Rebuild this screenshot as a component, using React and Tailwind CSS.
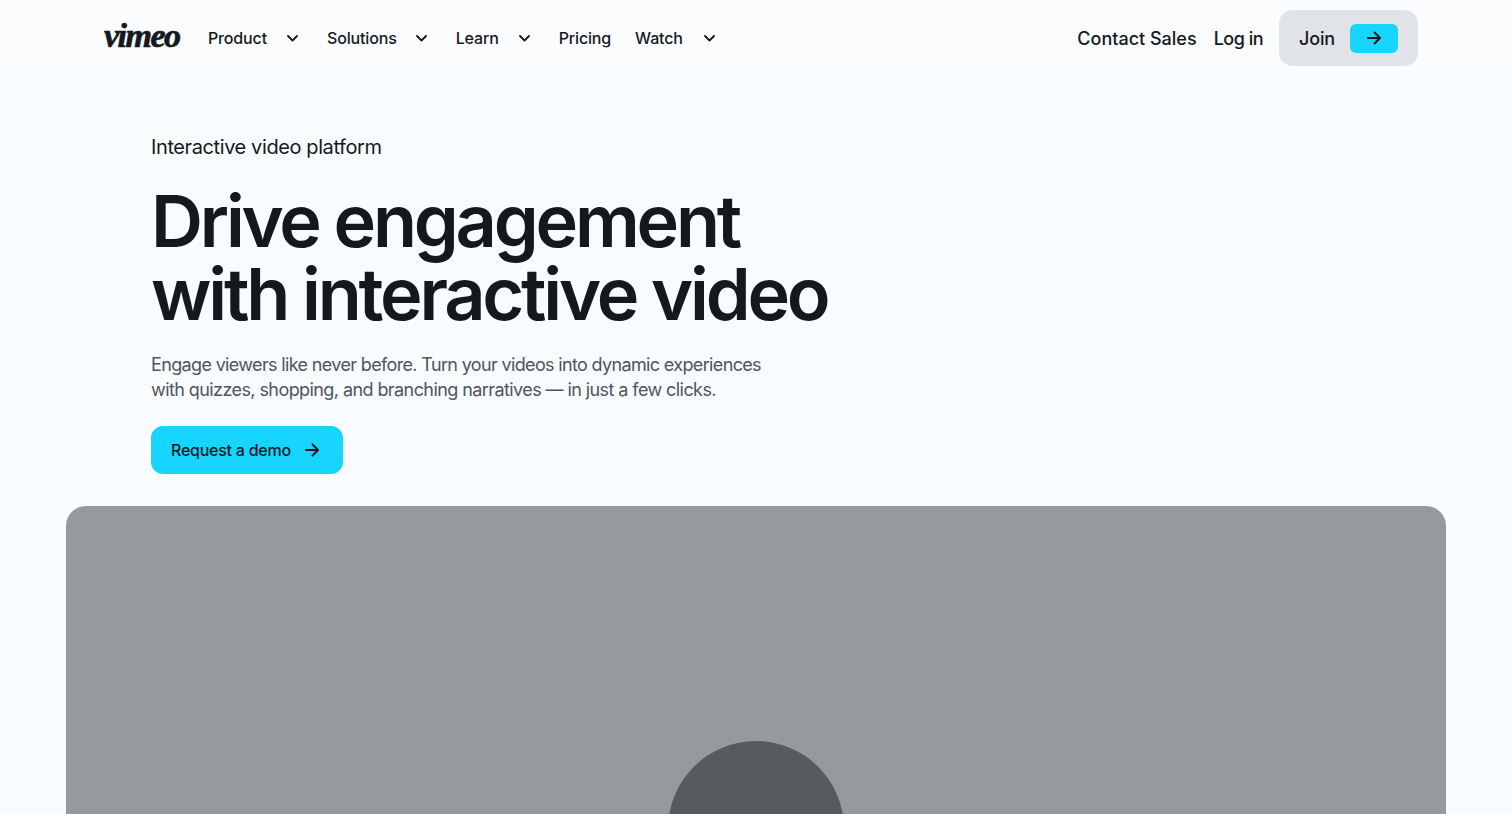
import React from "react";

function Chevron() {
  return (
    <svg width="11" height="7" viewBox="0 0 11 7" fill="none" stroke="#14191e" strokeWidth="1.8" strokeLinecap="round" strokeLinejoin="round">
      <path d="M1 1l4.5 4.5L10 1" />
    </svg>
  );
}

function Arrow({ size = 14 }) {
  return (
    <svg width={size} height={size} viewBox="0 0 14 14" fill="none" stroke="#14191e" strokeWidth="2" strokeLinecap="round" strokeLinejoin="round">
      <path d="M1 7h12M7.6 1.5 13 7l-5.4 5.5" />
    </svg>
  );
}

function NavItem({ label, gap, mr }) {
  return (
    <a className={`flex items-center ${gap} ${mr}`}>
      <span>{label}</span>
      <Chevron />
    </a>
  );
}

export default function App() {
  return (
    <div className="h-[814px] overflow-hidden bg-[#f9fcfe] text-[#14191e] font-['Inter',sans-serif]">
      <header className="h-[76px] bg-[#fbfcfe] pl-[104px] pr-[94px] flex items-center justify-between text-[16px] font-medium tracking-[-0.15px]">
        <nav className="flex items-center">
          <span className="w-[76px] mr-[28px] text-[34px] leading-none font-bold italic tracking-[-1.5px] font-['Liberation_Serif',serif] [-webkit-text-stroke:0.7px_#14191e] -mt-[4px]">vimeo</span>
          <NavItem label="Product" gap="gap-[20px]" mr="mr-[29px]" />
          <NavItem label="Solutions" gap="gap-[19px]" mr="mr-[29px]" />
          <NavItem label="Learn" gap="gap-[20px]" mr="mr-[29px]" />
          <a className="mr-[24px]">Pricing</a>
          <NavItem label="Watch" gap="gap-[21px]" mr="" />
        </nav>
        <div className="flex items-center text-[18px]">
          <a className="tracking-[0px] mr-[17px]">Contact Sales</a>
          <a className="tracking-[-0.5px] mr-[16px]">Log in</a>
          <a className="w-[139px] h-[56px] rounded-[14px] bg-[#e0e4e8] pl-[20px] pr-[20px] flex items-center justify-between">
            <span>Join</span>
            <span className="w-[48px] h-[29px] rounded-[6px] bg-[#17d5ff] flex items-center justify-center">
              <Arrow />
            </span>
          </a>
        </div>
      </header>

      <main>
        <section className="pl-[151px] pt-[59px]">
          <p className="text-[20px] leading-[24px] tracking-[-0.4px]">Interactive video platform</p>
          <h1 className="mt-[25px] text-[72px] leading-[73px] font-semibold tracking-[-3.2px] text-[#14191e]">
            Drive engagement
            <br />
            with interactive video
          </h1>
          <p className="mt-[22px] text-[18px] leading-[25px] text-[#4d5560]">
            <span className="block tracking-[-0.65px]">Engage viewers like never before. Turn your videos into dynamic experiences</span>
            <span className="block tracking-[-0.58px]">with quizzes, shopping, and branching narratives — in just a few clicks.</span>
          </p>
          <a className="mt-[24px] w-[192px] h-[48px] rounded-[12px] bg-[#17d5ff] pl-[20px] flex items-center gap-[14px] text-[16px] font-medium tracking-[-0.25px]">
            <span>Request a demo</span>
            <Arrow />
          </a>
        </section>

        <div className="relative mx-[66px] mt-[32px] h-[500px] rounded-[20px] bg-[#969a9c] overflow-hidden">
          <div className="absolute left-1/2 top-[235px] w-[176px] h-[176px] -translate-x-1/2 rounded-full bg-[#585b5d]" />
        </div>
      </main>
    </div>
  );
}
